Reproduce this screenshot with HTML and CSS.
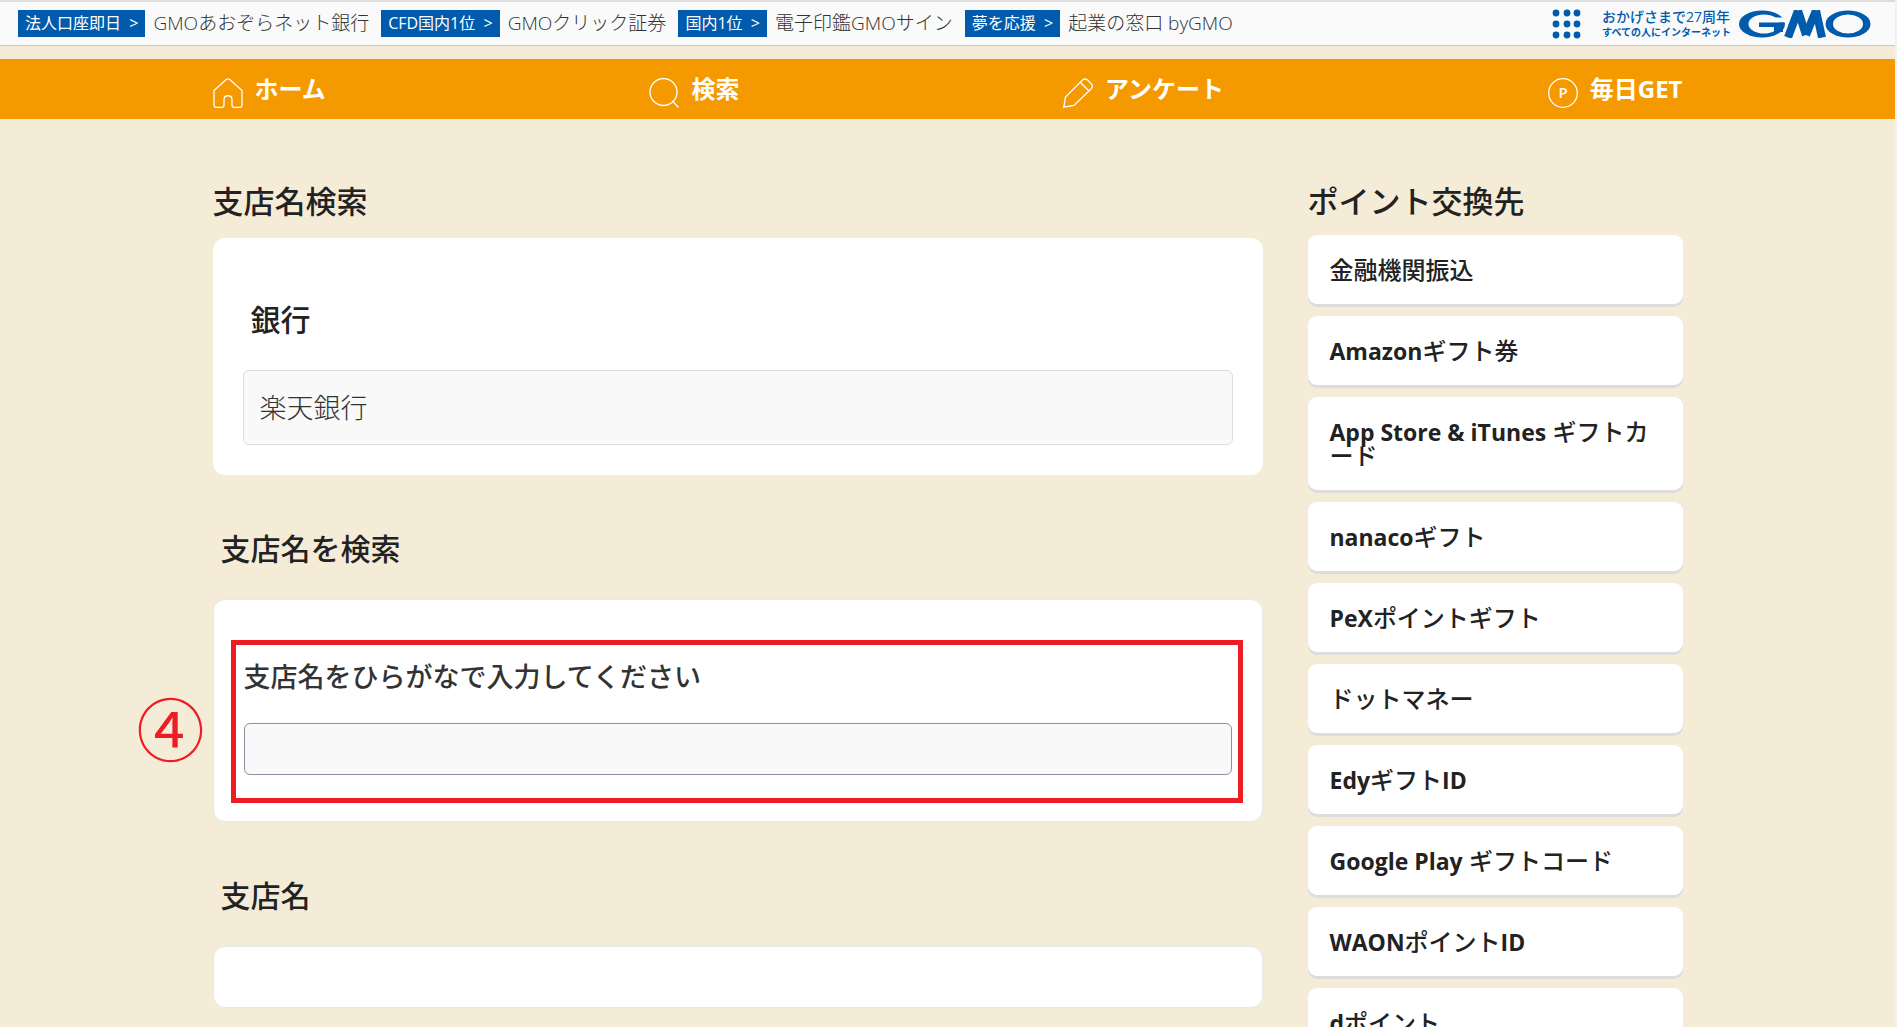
FILE: index.html
```html
<!DOCTYPE html>
<html lang="ja">
<head>
<meta charset="utf-8">
<meta name="viewport" content="width=device-width, initial-scale=1">
<title>支店名検索</title>
<link rel="stylesheet" href="styles.css">
</head>
<body>
<div class="group-bar">
  <ul class="group-links">
    <li><a href="#"><span class="tag">法人口座即日&nbsp; &gt;</span>GMOあおぞらネット銀行</a></li>
    <li><a href="#"><span class="tag">CFD国内1位&nbsp; &gt;</span>GMOクリック証券</a></li>
    <li><a href="#"><span class="tag">国内1位&nbsp; &gt;</span>電子印鑑GMOサイン</a></li>
    <li><a href="#"><span class="tag">夢を応援&nbsp; &gt;</span>起業の窓口 byGMO</a></li>
  </ul>
  <div class="group-brand">
    <button class="apps" type="button" aria-label="グループサービス一覧">
      <svg width="30" height="30" viewBox="0 0 30 30" fill="#005bac">
        <circle cx="4" cy="4" r="3.4"/><circle cx="15" cy="4" r="3.4"/><circle cx="25" cy="4" r="3.4"/>
        <circle cx="4" cy="15" r="3.4"/><circle cx="15" cy="15" r="3.4"/><circle cx="25" cy="15" r="3.4"/>
        <circle cx="4" cy="26" r="3.4"/><circle cx="15" cy="26" r="3.4"/><circle cx="25" cy="26" r="3.4"/>
      </svg>
    </button>
    <p class="slogan"><span class="slogan-main">おかげさまで27周年</span><span class="slogan-sub">すべての人にインターネット</span></p>
    <a href="#" class="logo" aria-label="GMO">
      <svg width="132" height="28" viewBox="0 0 132 28">
        <ellipse cx="23" cy="14" rx="23" ry="13.5" fill="#005bac"/>
        <ellipse cx="25" cy="14" rx="15.5" ry="9.6" fill="#fafafa"/>
        <rect x="33" y="7.5" width="14" height="5" fill="#fafafa"/>
        <rect x="20" y="12.5" width="25" height="4.5" fill="#005bac"/>
        <rect x="35" y="14" width="9" height="8" fill="#005bac"/>
        <g stroke="#005bac" fill="none" stroke-width="8">
          <line x1="59" y1="0.5" x2="49" y2="27.5"/>
          <line x1="59" y1="0.5" x2="67" y2="25"/>
          <line x1="67" y1="25" x2="77" y2="0.5"/>
          <line x1="77" y1="0.5" x2="83" y2="27.5"/>
        </g>
        <ellipse cx="109" cy="14" rx="24" ry="14.5" fill="#fafafa"/>
        <ellipse cx="109" cy="14" rx="22.5" ry="13.5" fill="#005bac"/>
        <ellipse cx="109" cy="14" rx="15" ry="9.6" fill="#fafafa"/>
      </svg>
    </a>
  </div>
</div>

<nav class="main-nav">
  <ul class="container nav-list">
    <li><a href="#"><svg class="nav-icon" viewBox="0 0 30 30"><path d="M1 27V12.500L13.500 1.300Q15 .3 16.500 1.300L29 12.500V27Q29 29.300 27 29.300H21Q19 29.300 19 27V21.500C19 16.500 11 16.500 11 21.500V27Q11 29.300 9 29.300H3Q1 29.300 1 27Z"/></svg>ホーム</a></li>
    <li><a href="#"><svg class="nav-icon" viewBox="0 0 30 30"><circle cx="14.500" cy="14" r="13.500"/><path d="M23.500 23L29.500 29.500"/></svg>検索</a></li>
    <li><a href="#"><svg class="nav-icon" viewBox="0 0 30 30"><path d="M.8 29.200L2.500 19L19.500 2Q22 0 24.500 2L28 5.500Q30.500 8 28.500 10.500L11 27.500Z M17.500 4.500L26 13"/></svg>アンケート</a></li>
    <li><a href="#"><svg class="nav-icon" viewBox="0 0 30 30"><circle cx="15" cy="15" r="14.300"/><text class="coin" x="15" y="20" text-anchor="middle">P</text></svg>毎日GET</a></li>
  </ul>
</nav>

<div class="container page">
  <main class="content">
    <h1 class="title">支店名検索</h1>
    <section class="card bank">
      <h2 class="section-title">銀行</h2>
      <p class="bank-name">楽天銀行</p>
    </section>

    <h2 class="section-title outside">支店名を検索</h2>
    <section class="card outlined search">
      <label class="field-label" for="branch">支店名をひらがなで入力してください</label>
      <input class="field" id="branch" type="text">
      <div class="highlight"></div>
      <span class="step">④</span>
    </section>

    <h2 class="section-title outside">支店名</h2>
    <section class="card outlined results"></section>
  </main>

  <aside class="sidebar">
    <h2 class="title">ポイント交換先</h2>
    <ul class="exchange">
      <li><a href="#">金融機関振込</a></li>
      <li><a href="#"><b>Amazon</b>ギフト券</a></li>
      <li><a href="#"><b>App Store &amp; iTunes</b> ギフトカード</a></li>
      <li><a href="#"><b>nanaco</b>ギフト</a></li>
      <li><a href="#"><b>PeX</b>ポイントギフト</a></li>
      <li><a href="#">ドットマネー</a></li>
      <li><a href="#"><b>Edy</b>ギフト<b>ID</b></a></li>
      <li><a href="#"><b>Google Play</b> ギフトコード</a></li>
      <li><a href="#"><b>WAON</b>ポイント<b>ID</b></a></li>
      <li><a href="#"><b>d</b>ポイント</a></li>
    </ul>
  </aside>
</div>
</body>
</html>
```
FILE: styles.css
```css
* { box-sizing: border-box; }

html {
  scrollbar-width: none;
  background: #f5ecd8;
}

body {
  margin: 0;
  border-right: 2px solid #f0f0f0;
  color: #222;
  font-family: "Open Sans", "Noto Sans CJK JP", sans-serif;
}

ul { margin: 0; padding: 0; list-style: none; }
h1, h2, p { margin: 0; }
a { color: inherit; text-decoration: none; }

.container {
  width: calc(100% - 48px);
  max-width: 1470px;
  margin: 0 auto;
}

/* Group bar */
.group-bar {
  display: flex;
  justify-content: space-between;
  align-items: center;
  height: 46px;
  padding: 0 24px 0 18px;
  background: #fafafa;
  border-top: 2px solid #ddd;
  border-bottom: 1px solid #c8c8c8;
}

.group-links {
  display: flex;
  gap: 12px;
  color: #333;
  font-size: 19px;
  font-weight: 300;
  white-space: nowrap;
}

.group-links a {
  display: flex;
  align-items: center;
  gap: 8px;
  line-height: 27px;
}

.tag {
  padding: 0 7px;
  background: #005bac;
  color: #fff;
  font-size: 16px;
  font-weight: 400;
}

.group-brand { display: flex; align-items: center; }

.apps {
  display: flex;
  margin-right: 20px;
  padding: 0;
  border: 0;
  background: none;
}

.slogan {
  display: flex;
  flex-direction: column;
  margin-right: 8px;
  color: #005bac;
  font-weight: 600;
  white-space: nowrap;
}

.slogan-main { font-size: 14px; font-weight: 500; line-height: 16px; }
.slogan-sub { font-size: 10px; line-height: 14px; }
.logo, .logo svg { display: block; }

/* Main navigation */
.main-nav {
  margin-top: 13px;
  background: #f59900;
  color: #fff;
}

.nav-list {
  display: flex;
  justify-content: space-between;
  height: 60px;
}

.nav-list a {
  display: flex;
  gap: 12px;
  padding-top: 14px;
  font-size: 24px;
  font-weight: 700;
  line-height: 32px;
}

.nav-icon {
  width: 30px;
  height: 30px;
  margin-top: 5px;
  fill: none;
  stroke: #fff;
  stroke-width: 1.3;
}

.coin {
  fill: #fff;
  stroke: none;
  font-size: 15px;
  font-weight: 600;
}

/* Page */
.page {
  display: flex;
  align-items: flex-start;
  gap: 45px;
  padding-top: 58px;
}

.content { flex: 1; min-width: 0; }
.sidebar { width: 375px; }

.title {
  margin-bottom: 10px;
  font-size: 31px;
  font-weight: 500;
  line-height: 48px;
}

.section-title {
  font-size: 30px;
  font-weight: 500;
  line-height: 44px;
}

.outside {
  margin: 52px 8px 28px;
}

.card {
  background: #fff;
  border-radius: 12px;
}

.outlined {
  border: 1px solid #e6e8ec;
}

.bank {
  margin-top: 13px;
  padding: 60px 30px 30px;
}

.bank .section-title { margin: 0 8px 28px; }

.bank-name {
  padding: 0 16px;
  border: 1px solid #ddd;
  border-radius: 6px;
  background: #f9f9f9;
  color: #333;
  font-size: 27px;
  font-weight: 300;
  line-height: 73px;
}

.search {
  position: relative;
  padding: 57px 30px 46px;
}

.field-label {
  display: block;
  margin-bottom: 26px;
  color: #333;
  font-size: 27px;
  font-weight: 500;
  line-height: 40px;
}

.field {
  display: block;
  width: 100%;
  height: 52px;
  padding: 0 16px;
  border: 1px solid #8a90a0;
  border-radius: 6px;
  background: #f9f9f9;
  font: inherit;
  font-size: 27px;
}

/* Instruction marks laid over the form */
.highlight {
  position: absolute;
  inset: 40px 19px 18px 17px;
  border: 5px solid #ee1c23;
  pointer-events: none;
}

.step {
  position: absolute;
  top: 91px;
  left: -77px;
  color: #ee1c23;
  font-family: "Noto Sans CJK JP", sans-serif;
  font-size: 68px;
  font-weight: 400;
  line-height: 72px;
}

.results { min-height: 62px; }

/* Exchange list */
.exchange {
  display: grid;
  gap: 9px;
}

.exchange a {
  display: block;
  margin-bottom: 3px;
  padding: 23px 22px 22px;
  border-radius: 9px;
  background: #fff;
  box-shadow: 0 3px 0 #ddd;
  font-size: 24px;
  font-weight: 500;
  line-height: 24px;
}

.exchange b {
  font-size: 23px;
  font-weight: 700;
}
```
